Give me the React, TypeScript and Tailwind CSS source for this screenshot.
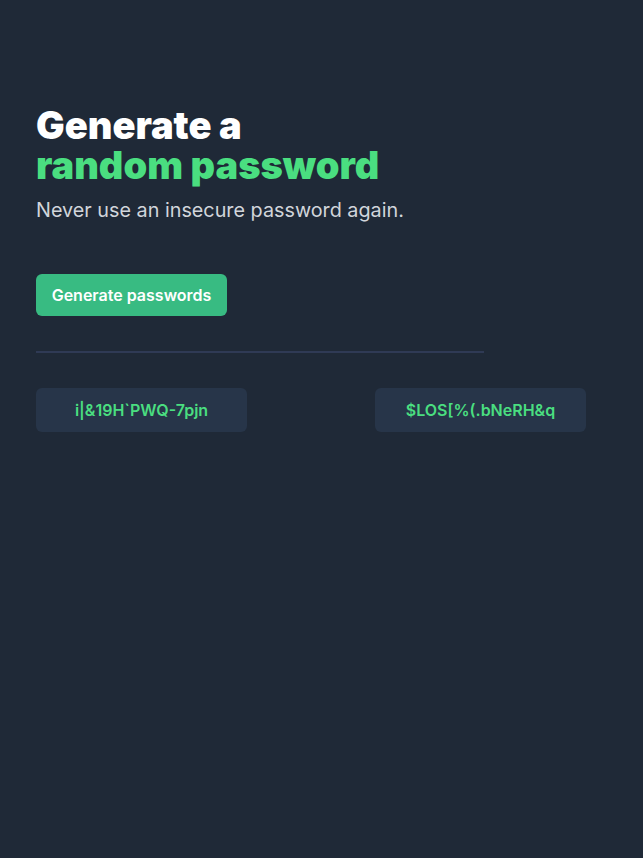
import React from 'react';

const passwords = ['i|&19H`PWQ-7pjn', '$LOS[%(.bNeRH&q'];

const App: React.FC = () => {
  return (
    <div className="min-h-[858px] bg-[#1f2937] font-['Inter',sans-serif]">
      <div className="w-[550px] pl-9 pt-[105px] box-content">
        <h1 className="text-[38px] font-black leading-[40px] tracking-normal text-white">
          Generate a
          <br />
          <span className="text-[#4ade80]">random password</span>
        </h1>
        <p className="mt-[11px] text-[19.8px] leading-[28px] text-[#d1d5db]">
          Never use an insecure password again.
        </p>

        <div className="mt-[50px]">
          <button className="h-[42px] w-[191px] rounded-md bg-[#38bb82] text-[16px] font-semibold text-white">
            Generate passwords
          </button>
        </div>

        <div className="mt-[35px] h-[2px] w-[448px] bg-[#2f3a55]" />

        <div className="mt-[35px] flex justify-between">
          {passwords.map((p) => (
            <div
              key={p}
              className="flex h-[44px] w-[211px] items-center justify-center rounded-md bg-[#273549] text-[16px] font-semibold text-[#4ade80]"
            >
              {p}
            </div>
          ))}
        </div>
      </div>
    </div>
  );
};

export default App;
